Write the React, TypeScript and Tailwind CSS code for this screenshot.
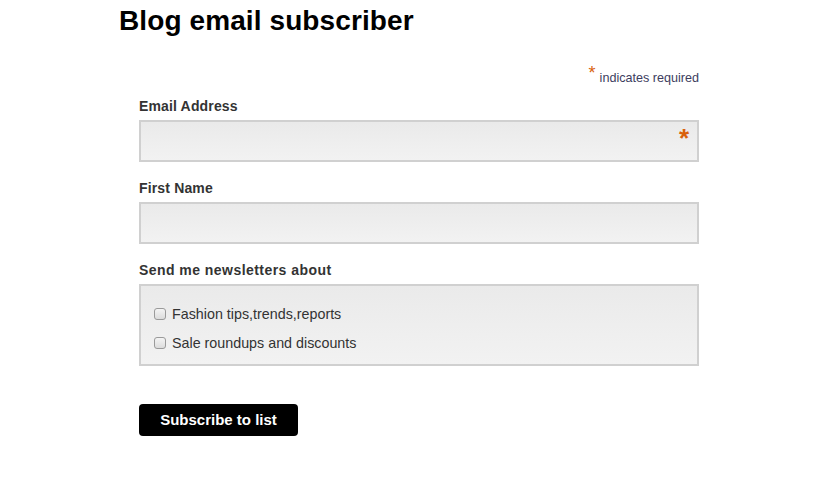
import React from "react";

function Field({ label, required, top }: { label: string; required?: boolean; top: string }) {
  return (
    <div className={top}>
      <label className="block text-[14px] leading-[18px] font-bold text-[#333] tracking-[0.15px]">{label}</label>
      <div className="relative mt-[5px] h-[42px] border-2 border-[#d0d0d0] bg-gradient-to-b from-[#eaeaea] to-[#f2f2f2]">
        {required && (
          <span className="absolute right-[8px] top-[3px] text-[26px] leading-[26px] font-bold text-[#d9610d]">*</span>
        )}
      </div>
    </div>
  );
}

function Check({ label }: { label: string }) {
  return (
    <div className="flex items-center h-[29px]">
      <span className="ml-[13px] w-[12px] h-[12px] rounded-[3px] border border-[#9a9a9a] bg-gradient-to-b from-[#f4f4f4] to-[#dcdcdc]" />
      <span className="ml-[6px] text-[14.3px] leading-[18px] text-[#333]">{label}</span>
    </div>
  );
}

export default function App() {
  return (
    <div className="min-h-screen bg-white font-['Liberation_Sans',Arial,sans-serif]">
      <div className="pl-[119px]">
        <h2 className="pt-[5px] text-[28px] leading-[32px] font-bold text-black tracking-[0.1px]">Blog email subscriber</h2>
      </div>
      <div className="ml-[139px] w-[560px]">
        <div className="mt-[33px] h-[17px] text-right text-[12.6px] leading-[16px] text-[#3d3d5e]">
          <span className="relative -top-[3px] text-[#d9610d] text-[18px] leading-[10px] mr-[4px]">*</span>indicates required
        </div>
        <Field label="Email Address" required top="mt-[10px]" />
        <Field label="First Name" top="mt-[17px]" />
        <div className="mt-[17px]">
          <label className="block text-[14px] leading-[18px] font-bold text-[#333] tracking-[0.45px]">Send me newsletters about</label>
          <div className="mt-[5px] h-[82px] border-2 border-[#d0d0d0] bg-gradient-to-b from-[#eaeaea] to-[#f2f2f2] pt-[13px]">
            <Check label="Fashion tips,trends,reports" />
            <Check label="Sale roundups and discounts" />
          </div>
        </div>
        <button className="mt-[38px] w-[159px] h-[32px] rounded-[4px] bg-black text-white text-[15px] font-bold leading-[32px]">
          Subscribe to list
        </button>
      </div>
    </div>
  );
}
